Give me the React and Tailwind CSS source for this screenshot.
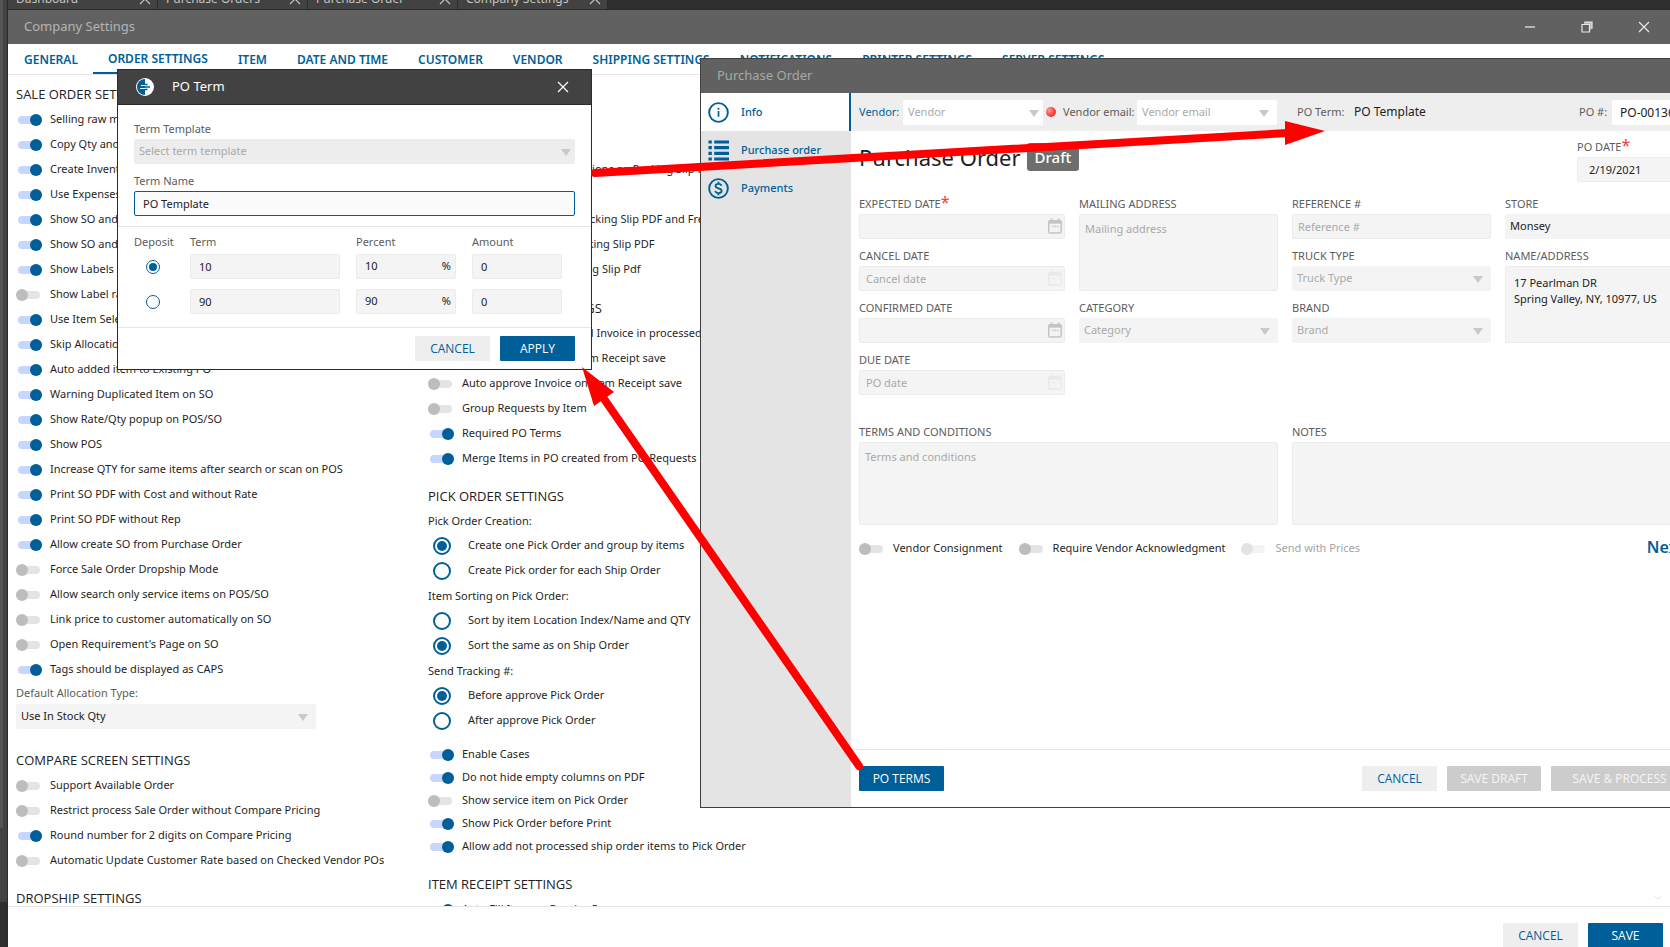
import React, { useId } from 'react';

const openTabs = ['Dashboard', 'Purchase Orders', 'Purchase Order', 'Company Settings'];

const settingsTabs = [
  'GENERAL',
  'ORDER SETTINGS',
  'ITEM',
  'DATE AND TIME',
  'CUSTOMER',
  'VENDOR',
  'SHIPPING SETTINGS',
  'NOTIFICATIONS',
  'PRINTER SETTINGS',
  'SERVER SETTINGS',
];

const saleOrderSettings = [
  ['Selling raw materials', true],
  ['Copy Qty and Rate', true],
  ['Create Inventory', true],
  ['Use Expenses', true],
  ['Show SO and PO', true],
  ['Show SO and Rate', true],
  ['Show Labels', true],
  ['Show Label rate', false],
  ['Use Item Selector', true],
  ['Skip Allocation', true],
  ['Auto added item to Existing PO', true],
  ['Warning Duplicated Item on SO', true],
  ['Show Rate/Qty popup on POS/SO', true],
  ['Show POS', true],
  ['Increase QTY for same items after search or scan on POS', true],
  ['Print SO PDF with Cost and without Rate', true],
  ['Print SO PDF without Rep', true],
  ['Allow create SO from Purchase Order', true],
  ['Force Sale Order Dropship Mode', false],
  ['Allow search only service items on POS/SO', false],
  ['Link price to customer automatically on SO', false],
  ["Open Requirement's Page on SO", false],
  ['Tags should be displayed as CAPS', true],
];

const compareSettings = [
  ['Support Available Order', false],
  ['Restrict process Sale Order without Compare Pricing', false],
  ['Round number for 2 digits on Compare Pricing', true],
  ['Automatic Update Customer Rate based on Checked Vendor POs', false],
];

const shipOrderSettings = [
  ['Show Ship Order', true],
  ['Use Ship Order', true],
  ['Show Sales Item Descriptions on Packing Slip PDF', true],
  ['Show Rate', true],
  ['Show Customer ID on Packing Slip PDF and Freight', true],
  ['Show Item Notes on Packing Slip PDF', true],
  ['Show Amounts on Packing Slip Pdf', true],
];

const purchaseOrderSettings = [
  ['Allow to edit an approved Invoice in processed', false],
  ['Auto approve Bills on Item Receipt save', false],
  ['Auto approve Invoice on Item Receipt save', false],
  ['Group Requests by Item', false],
  ['Required PO Terms', true],
  ['Merge Items in PO created from PO Requests', true],
];

const pickOrderChoices = [
  {
    title: 'Pick Order Creation:',
    options: ['Create one Pick Order and group by items', 'Create Pick order for each Ship Order'],
    selected: 0,
  },
  {
    title: 'Item Sorting on Pick Order:',
    options: ['Sort by item Location Index/Name and QTY', 'Sort the same as on Ship Order'],
    selected: 1,
  },
  {
    title: 'Send Tracking #:',
    options: ['Before approve Pick Order', 'After approve Pick Order'],
    selected: 0,
  },
];

const pickOrderSettings = [
  ['Enable Cases', true],
  ['Do not hide empty columns on PDF', true],
  ['Show service item on Pick Order', false],
  ['Show Pick Order before Print', true],
  ['Allow add not processed ship order items to Pick Order', true],
];

const terms = [
  { term: '10', percent: '10', amount: '0', deposit: true },
  { term: '90', percent: '90', amount: '0', deposit: false },
];

const fieldClass =
  'block w-full h-[25px] rounded-xs border border-[#ececec] bg-[#f4f4f4] text-[11px] text-[#222] placeholder:text-[#a9a9a9] outline-none';
const areaClass =
  'block w-full resize-none rounded-xs border border-[#ececec] bg-[#f4f4f4] text-[11px] leading-4 text-[#222] placeholder:text-[#a9a9a9] outline-none';
const labelClass = 'block text-[11px] leading-4 text-[#5c5c5c] whitespace-nowrap';

const CloseIcon = ({ className }) => (
  <svg viewBox="0 0 12 12" className={className} fill="none" stroke="currentColor" strokeWidth="1.2">
    <path d="M1 1 11 11M11 1 1 11" />
  </svg>
);

const Caret = ({ edge = 'right-2' }) => (
  <svg
    viewBox="0 0 10 7"
    className={'pointer-events-none absolute top-[10px] h-[7px] w-[10px] ' + edge}
    fill="#c9c9c9"
  >
    <path d="M0 0h10L5 7z" />
  </svg>
);

const CalendarIcon = ({ faded }) => (
  <svg
    viewBox="0 0 14 16"
    className={
      'pointer-events-none absolute top-1 right-[3px] h-4 w-3.5 ' +
      (faded ? 'text-[#e9e9e9]' : 'text-[#c4c4c4]')
    }
    fill="none"
    stroke="currentColor"
  >
    <rect x="0.8" y="2.8" width="12.4" height="12.2" rx="1" strokeWidth="1.5" />
    <path d="M1 4.200h12" strokeWidth="3" />
    <path d="M3.500 0.500v3M10.500 0.500v3" strokeWidth="1.800" />
    <path d="M4 8.500h6.500" strokeWidth="1.500" strokeDasharray="1.500 0.900" />
  </svg>
);

const Toggle = ({ text, on = false, disabled = false, compact = false }) => (
  <label
    className={
      (compact ? 'h-[23px]' : 'h-[25px]') +
      ' flex items-center gap-2 text-[11px] whitespace-nowrap ' +
      (disabled ? 'text-[#a3a3a3]' : 'text-[#1f1f1f]')
    }
  >
    <input
      type="checkbox"
      defaultChecked={on}
      disabled={disabled}
      className="relative mr-0.5 h-2 w-6 shrink-0 appearance-none rounded-full bg-[#e4e4e4] before:absolute before:-top-0.5 before:left-0 before:size-3 before:rounded-full before:bg-[#bdbdbd] checked:mr-0 checked:ml-0.5 checked:bg-[#c6d6ff] checked:before:left-3 checked:before:bg-[#005f98] disabled:bg-[#f3f3f3] disabled:before:bg-[#e3e3e3]"
    />
    {text}
  </label>
);

const ToggleList = ({ items, compact }) => (
  <div>
    {items.map(([text, on]) => (
      <Toggle key={text} text={text} on={on} compact={compact} />
    ))}
  </div>
);

const Heading = ({ children }) => (
  <h2 className="flex h-6 items-center font-['Open_Sans','Noto_Sans',sans-serif] text-[13px] font-medium whitespace-nowrap text-[#222]">
    {children}
  </h2>
);

const Field = ({ label, required, children }) => {
  const id = useId();
  return (
    <div className="min-w-0">
      <label htmlFor={id} className={labelClass + ' mb-0.5'}>
        {label}
        {required && <span className="align-top text-[16px] leading-3 text-[#f03a3a]">*</span>}
      </label>
      {children(id)}
    </div>
  );
};

const DateField = ({ label, required, placeholder }) => (
  <Field label={label} required={required}>
    {(id) => (
      <div className="relative">
        <input id={id} type="text" placeholder={placeholder} className={fieldClass + ' px-1.5'} />
        <CalendarIcon faded={Boolean(placeholder)} />
      </div>
    )}
  </Field>
);

const SelectField = ({ label, value, muted = true }) => (
  <Field label={label}>
    {(id) => (
      <div className="relative">
        <select
          id={id}
          className={
            'block h-[25px] w-full appearance-none rounded-xs bg-[#f4f4f4] px-[5px] text-[11px] outline-none ' +
            (muted ? 'text-[#a9a9a9]' : 'text-[#222]')
          }
        >
          <option>{value}</option>
        </select>
        <Caret />
      </div>
    )}
  </Field>
);

const Button = ({ children, kind = 'plain', className = 'w-[75px]' }) => {
  const kinds = {
    plain: 'bg-[#eeeeee] text-[#005f98]',
    primary: 'bg-[#005f98] text-white rounded-[1px]',
    disabled: 'bg-[#cccccc] text-[#f6f6f6] rounded-[1px]',
  };
  return (
    <button
      type="button"
      disabled={kind === 'disabled'}
      className={
        "h-[25px] shrink-0 font-['Open_Sans','Noto_Sans',sans-serif] text-[12px] whitespace-nowrap " +
        kinds[kind] +
        ' ' +
        className
      }
    >
      {children}
    </button>
  );
};

const RadioRow = ({ name, text, checked }) => (
  <label className="flex h-[25px] items-center gap-[17px] pl-[5px] text-[11px] whitespace-nowrap text-[#1f1f1f]">
    <input
      type="radio"
      name={name}
      defaultChecked={checked}
      className="grid size-[18px] shrink-0 appearance-none place-items-center rounded-full border-2 border-[#005f98] bg-white before:size-[10px] before:rounded-full checked:before:bg-[#005f98]"
    />
    {text}
  </label>
);

const AppTabs = () => (
  <div className="flex h-[9px] shrink-0 items-end overflow-hidden bg-[#2f2f2f]">
    {openTabs.map((tab) => (
      <div
        key={tab}
        className="flex w-[150px] shrink-0 items-center justify-between border-r border-[#2b2b2b] bg-[#424242] pr-1.5 pl-2 text-[12px] leading-5 text-[#c4c4c4]"
      >
        {tab}
        <button type="button" aria-label={'Close ' + tab}>
          <CloseIcon className="size-3" />
        </button>
      </div>
    ))}
  </div>
);

const SettingsWindow = () => (
  <section className="flex min-h-0 flex-1 flex-col border-t border-[#2b2b2b] bg-white">
    <header className="flex h-[34px] shrink-0 items-center bg-[#616161] pr-5 pl-4 text-[13px] text-[#b4b4b4]">
      <h1 className="flex-1">Company Settings</h1>
      <div className="flex items-center gap-[45px] text-[#e8e8e8]">
        <button type="button" aria-label="Minimize">
          <svg viewBox="0 0 12 12" className="size-3" stroke="#b4b4b4" strokeWidth="2">
            <path d="M1 6h10" />
          </svg>
        </button>
        <button type="button" aria-label="Restore">
          <svg viewBox="0 0 12 12" className="size-3" fill="none" stroke="currentColor" strokeWidth="1.2">
            <path d="M3 1h8v7l-2.500 1V3H3z" fill="#b4b4b4" stroke="none" />
            <path d="M1 3.500h7.500V11H1zM3.500 1.200H11v6.500" />
          </svg>
        </button>
        <button type="button" aria-label="Close">
          <CloseIcon className="size-3" />
        </button>
      </div>
    </header>

    <nav className="flex h-[31px] shrink-0 border-b border-[#e6e6e6] pl-px">
      {settingsTabs.map((tab) => (
        <a
          key={tab}
          href="#"
          className={
            'flex items-center px-[15px] pt-0.5 text-[12px] font-semibold whitespace-nowrap text-[#005f98] ' +
            (tab === 'ORDER SETTINGS' ? 'border-b-2 border-[#005f98]' : '')
          }
        >
          {tab}
        </a>
      ))}
    </nav>

    <div className="flex min-h-0 flex-1 overflow-hidden px-2 pt-2">
      <div className="w-[412px] shrink-0">
        <Heading>SALE ORDER SETTINGS</Heading>
        <ToggleList items={saleOrderSettings} />
        <label htmlFor="allocation" className="block text-[11px] leading-[22px] text-[#5c5c5c]">
          Default Allocation Type:
        </label>
        <div className="relative w-[300px]">
          <select
            id="allocation"
            className="block h-[25px] w-full appearance-none rounded-xs bg-[#f4f4f4] px-[5px] text-[11px] text-[#222]"
          >
            <option>Use In Stock Qty</option>
          </select>
          <Caret />
        </div>
        <div className="mt-5">
          <Heading>COMPARE SCREEN SETTINGS</Heading>
          <ToggleList items={compareSettings} />
        </div>
        <div className="mt-3.5">
          <Heading>DROPSHIP SETTINGS</Heading>
        </div>
      </div>

      <div className="flex-1">
        <Heading>SHIP ORDER SETTINGS</Heading>
        <ToggleList items={shipOrderSettings} />
        <div className="mt-[15px]">
          <Heading>PURCHASE ORDER SETTINGS</Heading>
          <ToggleList items={purchaseOrderSettings} />
        </div>
        <div className="mt-3.5">
          <Heading>PICK ORDER SETTINGS</Heading>
          <div className="flex flex-col gap-px">
            {pickOrderChoices.map((group) => (
              <fieldset key={group.title}>
                <legend className="text-[11px] leading-6 text-[#1f1f1f]">{group.title}</legend>
                {group.options.map((option, index) => (
                  <RadioRow
                    key={option}
                    name={group.title}
                    text={option}
                    checked={index === group.selected}
                  />
                ))}
              </fieldset>
            ))}
          </div>
          <div className="mt-2.5">
            <ToggleList items={pickOrderSettings} compact />
          </div>
        </div>
        <div className="mt-[15px]">
          <Heading>ITEM RECEIPT SETTINGS</Heading>
          <Toggle text="Auto Fill Item on Receive Po" on />
        </div>
      </div>

      <svg viewBox="0 0 8 5" className="mb-1.5 h-[5px] w-2 self-end" fill="none" stroke="#e4e4e4">
        <path d="M0.5 0.5 4 4 7.5 0.5" />
      </svg>
    </div>

    <footer className="flex h-[41px] shrink-0 items-start justify-end gap-2.5 border-t border-[#e6e6e6] pt-4 pr-[7px]">
      <Button>CANCEL</Button>
      <Button kind="primary">SAVE</Button>
    </footer>
  </section>
);

const sideItems = [
  {
    text: 'Info',
    icon: (
      <>
        <circle cx="11" cy="11" r="9.8" strokeWidth="2" />
        <path d="M11 9.500v6M11 6v2" strokeWidth="1.800" />
      </>
    ),
  },
  {
    text: 'Purchase order',
    icon: (
      <>
        <path d="M0.500 2h3.500M0.500 8h3.500M0.500 14h3.500M0.500 20h3.500" strokeWidth="3.200" />
        <path d="M6.500 2H22M6.500 8H22M6.500 14H22M6.500 20H22" strokeWidth="3.200" />
      </>
    ),
  },
  {
    text: 'Payments',
    icon: (
      <>
        <circle cx="11" cy="11" r="9.8" strokeWidth="2" />
        <path
          d="M14.2 8.2C13.8 6.8 12.6 6.2 11 6.2c-1.8 0-3.1.9-3.1 2.3 0 3.2 6.4 1.5 6.4 4.9 0 1.5-1.4 2.4-3.3 2.4-1.8 0-3-.8-3.4-2.300M11 4v2.500M11 15.500V18"
          strokeWidth="1.900"
        />
      </>
    ),
  },
];

const PurchaseOrderWindow = () => (
  <section className="absolute top-[58px] left-[700px] z-10 flex h-[750px] w-[1013px] flex-col border border-[#3f3f3f] bg-white">
    <header className="flex h-[34px] shrink-0 items-center bg-[#616161] px-4 text-[13px] text-[#a8a8a8]">
      Purchase Order
    </header>
    <div className="flex min-h-0 flex-1">
      <nav className="w-[150px] shrink-0 bg-[#e4e4e4]">
        {sideItems.map(({ text, icon }) => (
          <a
            key={text}
            href="#"
            className={
              'flex h-[38px] items-center gap-3 pl-[7px] text-[11px] font-medium whitespace-nowrap text-[#005f98] ' +
              (text === 'Info' ? 'border-r-2 border-[#005f98] bg-white' : '')
            }
          >
            <svg viewBox="0 0 22 22" className="size-[21px]" fill="none" stroke="currentColor">
              {icon}
            </svg>
            {text}
          </a>
        ))}
      </nav>

      <div className="flex min-w-0 flex-1 flex-col">
        <div className="flex h-[38px] shrink-0 items-center bg-[#eeeeee] px-2 text-[11px] whitespace-nowrap text-[#5c5c5c]">
          <label htmlFor="vendor" className="w-11 text-[#005f98]">
            Vendor:
          </label>
          <div className="relative w-[140px]">
            <select
              id="vendor"
              className="block h-[25px] w-full appearance-none rounded-xs bg-white px-[5px] text-[11px] text-[#a9a9a9]"
            >
              <option>Vendor</option>
            </select>
            <Caret edge="right-1" />
          </div>
          <span className="mx-[3px] size-2.5 rounded-full bg-[radial-gradient(circle_at_35%_35%,#ff9a9a,#f23a3a_60%)]"></span>
          <label htmlFor="vendor-email" className="ml-1 w-[74px]">
            Vendor email:
          </label>
          <div className="relative w-[140px]">
            <select
              id="vendor-email"
              className="block h-[25px] w-full appearance-none rounded-xs bg-white px-[5px] text-[11px] text-[#a9a9a9]"
            >
              <option>Vendor email</option>
            </select>
            <Caret />
          </div>
          <span className="ml-5 w-[57px]">PO Term:</span>
          <span className="flex-1 text-[12px] text-[#222]">PO Template</span>
          <label htmlFor="po-number" className="w-[33px]">
            PO #:
          </label>
          <input
            id="po-number"
            type="text"
            defaultValue="PO-001365"
            className="h-[25px] w-[92px] rounded-xs bg-white px-2 text-[12px] text-[#222]"
          />
        </div>

        <div className="flex min-h-0 flex-1 flex-col px-2 pt-2">
          <div className="flex items-start justify-between">
            <div className="flex items-center gap-1.5 pt-1">
              <h1 className="text-[22px] leading-7 whitespace-nowrap text-[#222]">Purchase Order</h1>
              <span className="rounded-[3px] bg-[#6e6e6e] px-2 text-[15px] leading-7 font-medium text-white">
                Draft
              </span>
            </div>
            <div className="w-[127px]">
              <Field label="PO DATE" required>
                {(id) => (
                  <input id={id} type="text" defaultValue="2/19/2021" className={fieldClass + ' px-[11px]'} />
                )}
              </Field>
            </div>
          </div>

          <div className="mt-3.5 grid grid-cols-[206px_199px_199px_199px] gap-x-3.5">
            <div className="flex flex-col gap-[9px]">
              <DateField label="EXPECTED DATE" required />
              <DateField label="CANCEL DATE" placeholder="Cancel date" />
              <DateField label="CONFIRMED DATE" />
              <DateField label="DUE DATE" placeholder="PO date" />
            </div>
            <div className="flex flex-col gap-[9px]">
              <Field label="MAILING ADDRESS">
                {(id) => (
                  <textarea id={id} placeholder="Mailing address" className={areaClass + ' h-[77px] px-[5px] py-1.5'} />
                )}
              </Field>
              <SelectField label="CATEGORY" value="Category" />
            </div>
            <div className="flex flex-col gap-[9px]">
              <Field label="REFERENCE #">
                {(id) => <input id={id} type="text" placeholder="Reference #" className={fieldClass + ' px-[5px]'} />}
              </Field>
              <SelectField label="TRUCK TYPE" value="Truck Type" />
              <SelectField label="BRAND" value="Brand" />
            </div>
            <div className="flex flex-col gap-[9px]">
              <SelectField label="STORE" value="Monsey" muted={false} />
              <Field label="NAME/ADDRESS">
                {(id) => (
                  <textarea
                    id={id}
                    defaultValue={'17 Pearlman DR\nSpring Valley, NY, 10977, US'}
                    className={areaClass + ' h-[77px] px-2 py-2'}
                  />
                )}
              </Field>
            </div>
          </div>

          <div className="mt-[29px] grid grid-cols-[419px_412px] gap-x-3.5">
            <Field label="TERMS AND CONDITIONS">
              {(id) => (
                <textarea id={id} placeholder="Terms and conditions" className={areaClass + ' h-[83px] px-[5px] py-1.5'} />
              )}
            </Field>
            <Field label="NOTES">
              {(id) => <textarea id={id} className={areaClass + ' h-[83px] px-[5px] py-1.5'} />}
            </Field>
          </div>

          <div className="mt-[11px] flex items-center gap-4">
            <Toggle text="Vendor Consignment" />
            <Toggle text="Require Vendor Acknowledgment" />
            <Toggle text="Send with Prices" disabled />
            <a href="#" className="mr-5 ml-auto pb-1 text-[16px] leading-5 font-semibold text-[#005f98]">
              Next
            </a>
          </div>
        </div>

        <footer className="flex h-[58px] shrink-0 items-start gap-2.5 border-t border-[#e6e6e6] px-2 pt-4">
          <Button kind="primary" className="mr-auto w-[85px]">
            PO TERMS
          </Button>
          <Button>CANCEL</Button>
          <Button kind="disabled" className="w-[94px]">
            SAVE DRAFT
          </Button>
          <Button kind="disabled" className="w-[153px] pr-4">
            SAVE &amp; PROCESS
          </Button>
        </footer>
      </div>
    </div>
  </section>
);

const TermDialog = () => (
  <section
    role="dialog"
    aria-label="PO Term"
    className="absolute top-[69px] left-[117px] z-20 w-[475px] border border-[#2b2b2b] bg-white"
  >
    <header className="flex h-[35px] items-center border-b border-[#2b2b2b] bg-[#424242] pr-[22px] pl-[18px] text-white">
      <svg viewBox="0 0 18 18" className="mr-[18px] size-[18px]">
        <circle cx="9" cy="9" r="9" fill="#fff" />
        <path d="M9 1a8 8 0 0 0 0 16z" fill="#005f98" />
        <path d="M5 7.500h4M4 10.500h5" stroke="#fff" strokeWidth="1.200" />
        <path d="M9 6.500h2.500M9 9h5M9 11.500h2.500" stroke="#005f98" strokeWidth="1.300" />
      </svg>
      <h2 className="flex-1 text-[13px]">PO Term</h2>
      <button type="button" aria-label="Close">
        <CloseIcon className="size-3" />
      </button>
    </header>

    <div className="px-4 pt-4 pb-2.5">
      <label htmlFor="template" className={labelClass + ' mb-0.5'}>
        Term Template
      </label>
      <div className="relative">
        <select
          id="template"
          className="block h-[25px] w-full appearance-none rounded-xs bg-[#ededed] px-[5px] text-[11px] text-[#a9a9a9]"
        >
          <option>Select term template</option>
        </select>
        <Caret edge="right-1" />
      </div>
      <label htmlFor="term-name" className={labelClass + ' mt-[9px] mb-0.5'}>
        Term Name
      </label>
      <input
        id="term-name"
        type="text"
        defaultValue="PO Template"
        className="block h-[25px] w-full rounded-xs border border-[#005f98] bg-[#fbfbfb] px-2 text-[11px] text-[#222] outline-none"
      />
    </div>

    <div className="border-y border-[#e6e6e6] px-4 pt-[7px] pb-2">
      <table className="border-collapse text-left">
        <thead>
          <tr className="text-[11px] leading-[15px] text-[#5c5c5c]">
            <th className="w-14 p-0 font-normal">Deposit</th>
            <th className="w-[166px] p-0 font-normal">Term</th>
            <th className="w-[116px] p-0 font-normal">Percent</th>
            <th className="w-[90px] p-0 font-normal">Amount</th>
          </tr>
        </thead>
        <tbody>
          {terms.map((row) => (
            <tr key={row.term} className="h-[35px]">
              <td className="p-0 pl-3">
                <input
                  type="radio"
                  name="deposit"
                  aria-label={'Deposit ' + row.term}
                  defaultChecked={row.deposit}
                  className="grid size-[14px] appearance-none place-items-center rounded-full border border-[#005f98] before:size-2 before:rounded-full checked:before:bg-[#005f98]"
                />
              </td>
              <td className="p-0 pr-4">
                <input type="text" aria-label="Term" defaultValue={row.term} className={fieldClass + ' px-2'} />
              </td>
              <td className="p-0 pr-4">
                <div className="flex h-[25px] items-center rounded-xs border border-[#ececec] bg-[#f4f4f4] pr-1 pl-2 text-[11px] text-[#222]">
                  <input
                    type="text"
                    aria-label="Percent"
                    defaultValue={row.percent}
                    className="w-0 flex-1 bg-transparent outline-none"
                  />
                  %
                </div>
              </td>
              <td className="p-0">
                <input type="text" aria-label="Amount" defaultValue={row.amount} className={fieldClass + ' px-2'} />
              </td>
            </tr>
          ))}
        </tbody>
      </table>
    </div>

    <footer className="flex justify-end gap-2.5 px-4 py-2">
      <Button>CANCEL</Button>
      <Button kind="primary">APPLY</Button>
    </footer>
  </section>
);

// Red annotation arrows: PO TERMS button -> dialog -> PO Term value
const Arrows = () => (
  <svg className="pointer-events-none absolute inset-0 z-30 size-full" fill="#ff0000" stroke="#ff0000">
    <path d="M595 173 1288 133" strokeWidth="8" strokeLinecap="round" />
    <path d="M1285 121 1325 131 1285 145z" stroke="none" />
    <path d="M859 766 602 396" strokeWidth="8" strokeLinecap="round" />
    <path d="M582 367 614 392 594 406z" stroke="none" />
  </svg>
);

const App = () => (
  <div className="relative flex h-screen overflow-hidden bg-[#2f2f2f] font-['Noto_Sans','Open_Sans',sans-serif]">
    <div className="flex w-2 shrink-0 flex-col border-r border-[#2b2b2b]">
      <div className="flex-1 border-r-4 border-[#424242] bg-[#555555]"></div>
      <div className="h-[74px] bg-[#424242]"></div>
      <div className="h-[45px]"></div>
    </div>
    <div className="flex min-w-0 flex-1 flex-col">
      <AppTabs />
      <SettingsWindow />
    </div>
    <PurchaseOrderWindow />
    <TermDialog />
    <Arrows />
  </div>
);

export default App;
